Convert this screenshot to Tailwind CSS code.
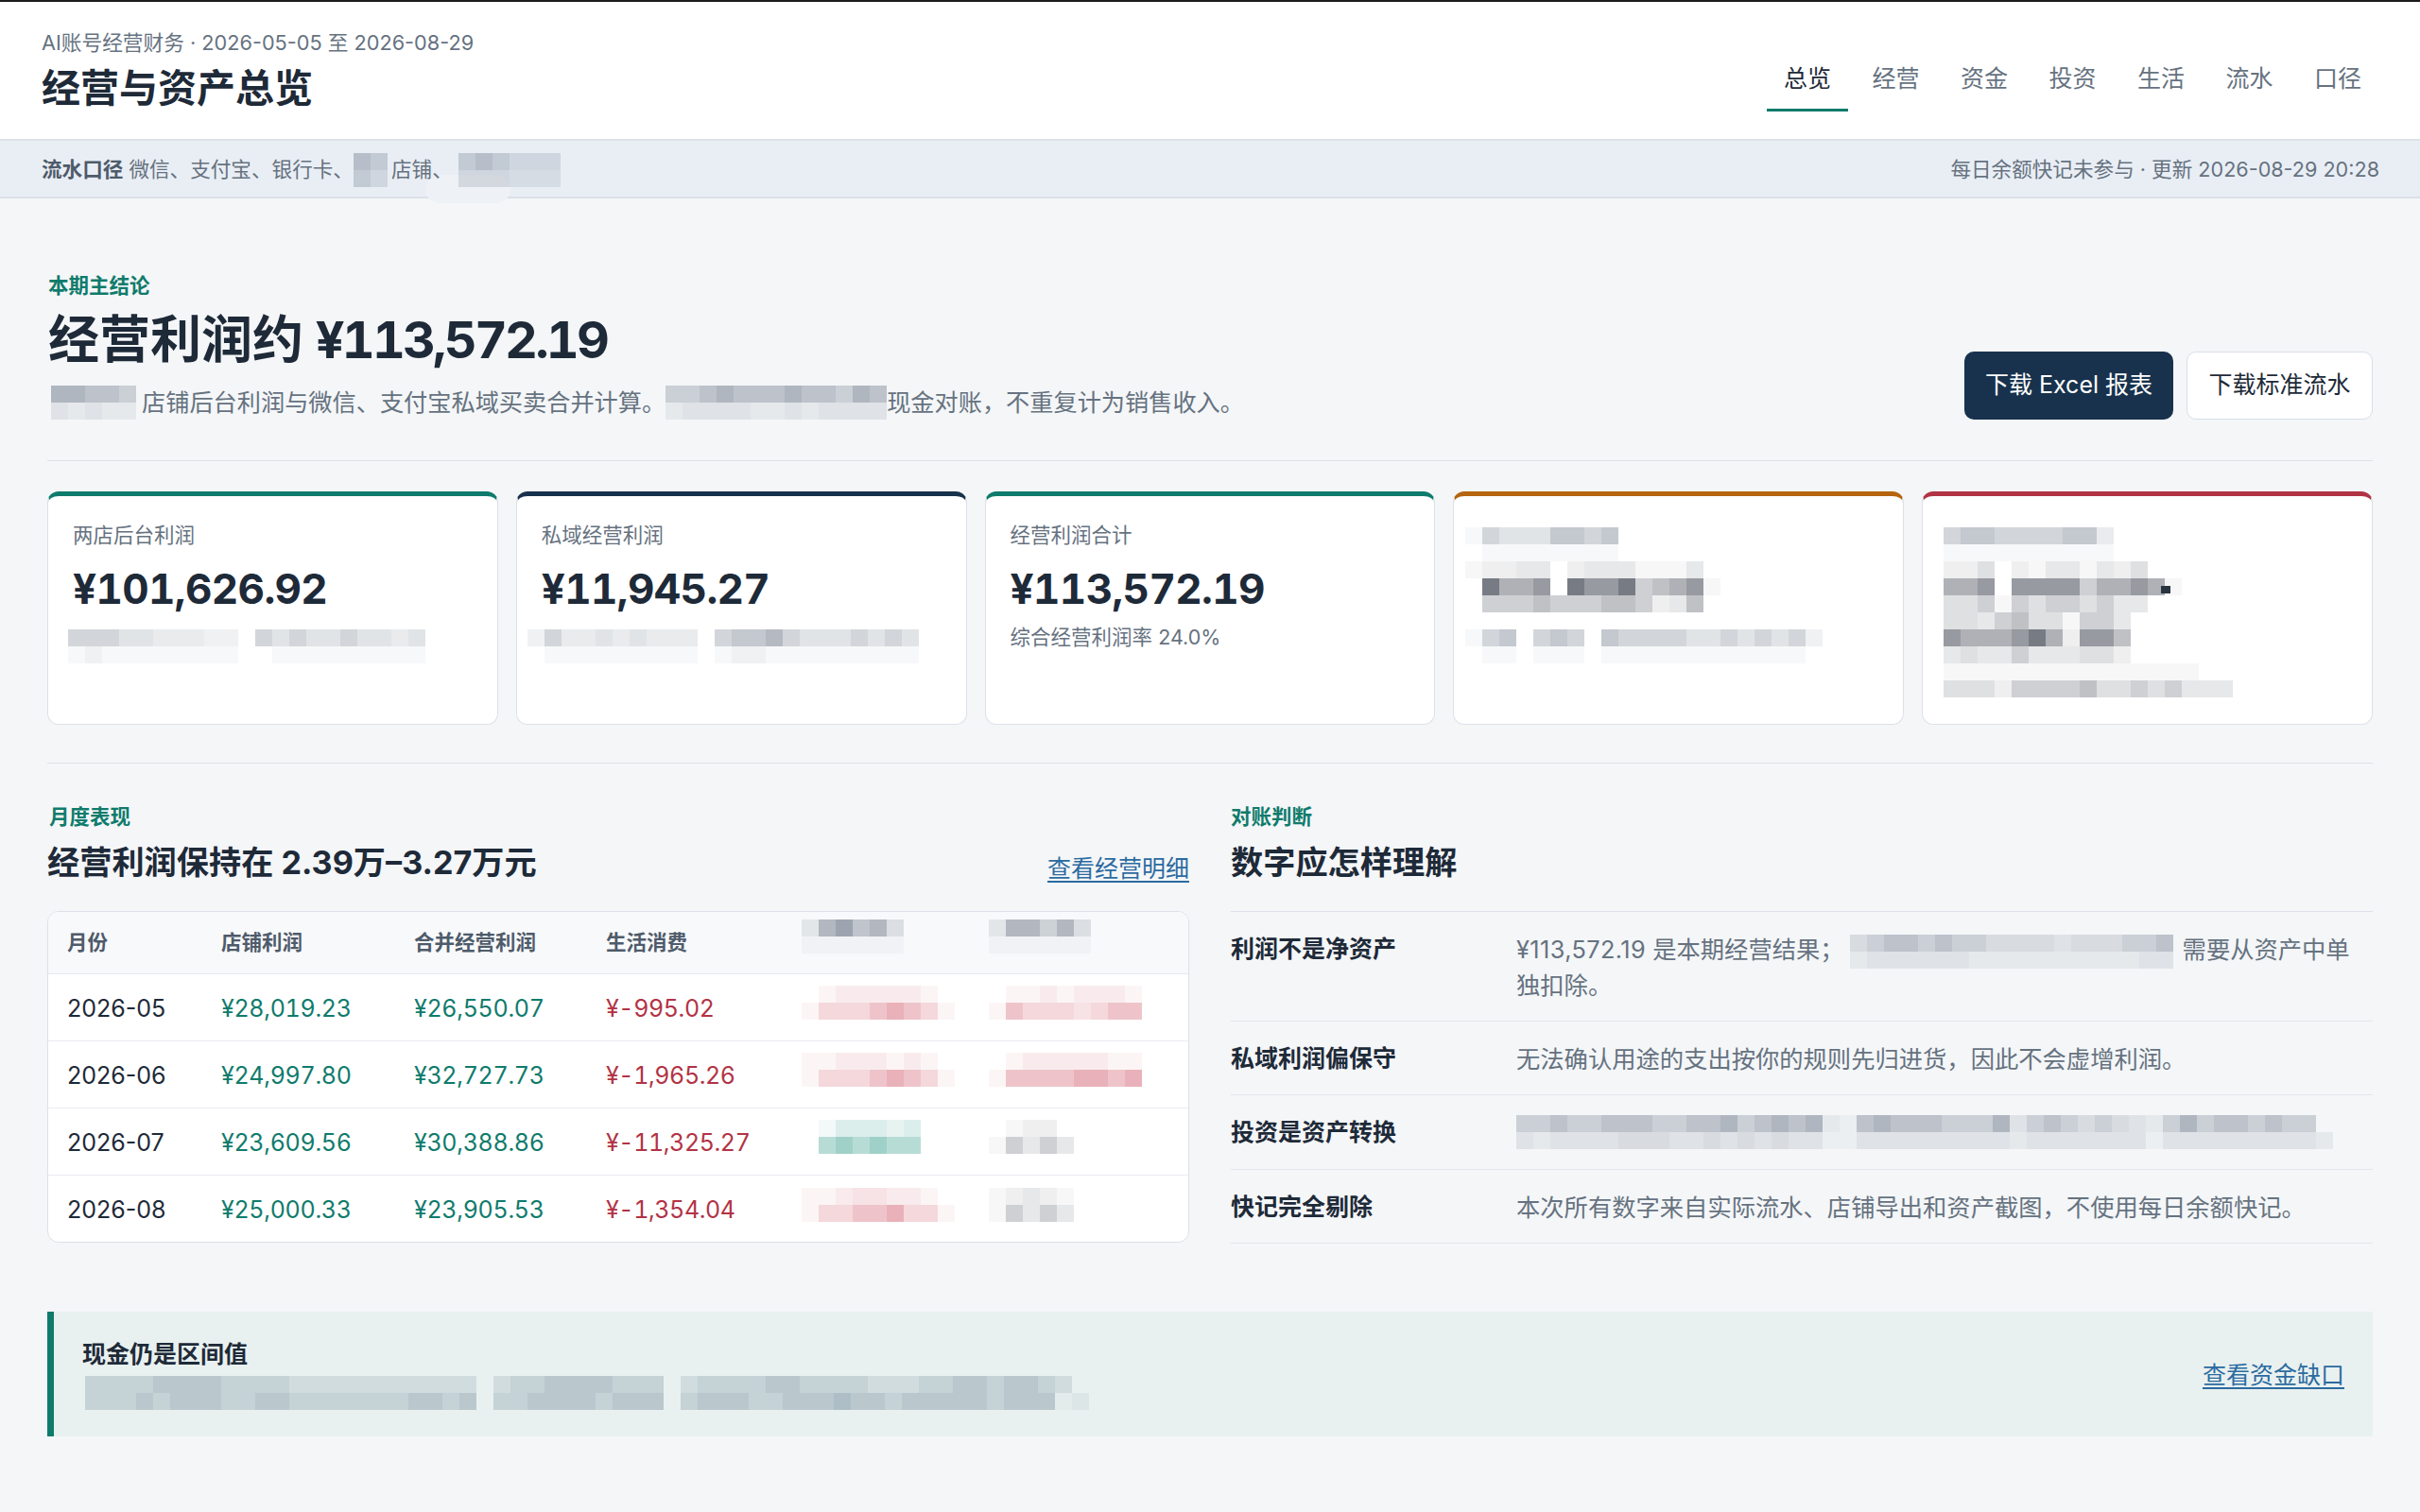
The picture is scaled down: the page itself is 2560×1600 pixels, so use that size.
<!doctype html>
<html lang="zh-CN">
<head>
<meta charset="utf-8">
<title>经营与资产总览</title>
<script src="https://cdn.jsdelivr.net/npm/@tailwindcss/browser@4"></script>
</head>
<body class="bg-[#f4f6f8]">
<div class="w-[2560px] h-[1600px] overflow-hidden flex flex-col bg-[#f4f6f8] text-[#1e2a38] font-[Inter,'Noto_Sans_CJK_SC',sans-serif]">

  <header class="h-[149px] shrink-0 bg-white border-t-2 border-t-[#1c1c1c] border-b-2 border-b-[#dde2e9] pl-[44px] pr-[44px] flex justify-between">
    <div>
      <div class="mt-[28px] text-[21.7px] leading-[30px] text-[#66727f]">AI账号经营财务 · 2026-05-05 至 2026-08-29</div>
      <div class="mt-[6px] text-[41px] leading-[54px] font-bold text-[#1e2a38]">经营与资产总览</div>
    </div>
    <nav class="flex gap-[8px] h-full items-start pt-[48px] text-[25px] leading-[66px] text-[#66727f]">
      <a class="w-[86px] h-[68px] text-center text-[#1e2a38] border-b-[3px] border-[#0f7b6c]">总览</a>
      <a class="w-[85px] h-[68px] text-center">经营</a>
      <a class="w-[86px] h-[68px] text-center">资金</a>
      <a class="w-[85px] h-[68px] text-center">投资</a>
      <a class="w-[86px] h-[68px] text-center">生活</a>
      <a class="w-[85px] h-[68px] text-center">流水</a>
      <a class="w-[86px] h-[68px] text-center">口径</a>
    </nav>
  </header>

  <div class="relative h-[61px] shrink-0 bg-[#e9eef5] border-b-2 border-[#dbe1e9] pt-[2px] pl-[44px] pr-[43px] flex items-center justify-between text-[21.6px] text-[#66727f]">
    <div class="absolute left-[450px] top-[36px] w-[90px] h-[30px] rounded-full bg-[#eef1f5]"></div>
    <div class="relative flex items-center whitespace-nowrap">
      <span class="font-semibold text-[#4e5b6a]">流水口径</span>
      <span class="ml-[6px]">微信、支付宝、银行卡、</span>
      <span class="mosaic" data-rows="65|54"></span>
      <span class="ml-[4px]">店铺、</span>
      <span class="mosaic ml-[6px]" data-rows="565444|444333"></span>
    </div>
    <div>每日余额快记未参与 · 更新 2026-08-29 20:28</div>
  </div>

  <main class="flex-1 px-[50px] flex flex-col">
    <section class="flex justify-between items-end pt-[78px] pb-[41px] border-b border-[#dde1e7]">
      <div>
        <div class="pl-[1px] text-[21.5px] leading-[28px] font-semibold text-[#0f7b6c]">本期主结论</div>
        <h1 class="mt-[8px] pl-[1px] text-[54px] leading-[72px] font-bold text-[#1e2a38]">经营利润约 <span class="tabular-nums tracking-[-2.8px]">¥113,572.19</span></h1>
        <p class="mt-[10px] flex items-center text-[25.2px] leading-[40px] text-[#66727f] whitespace-nowrap">
          <span class="mosaic ml-[4px] mr-[6px]" data-rows="77665|32322"></span>
          <span>店铺后台利润与微信、支付宝私域买卖合并计算。</span>
          <span class="mosaic" data-rows="5567666766576|2333322323333"></span>
          <span>现金对账，不重复计为销售收入。</span>
        </p>
      </div>
      <div class="flex gap-[14px] mb-[2px] text-[25px]">
        <button class="w-[221px] h-[72px] rounded-[10px] bg-[#18324d] text-white">下载 Excel 报表</button>
        <button class="w-[197px] h-[72px] rounded-[10px] bg-white border border-[#d8dfe8] text-[#1e2a38]">下载标准流水</button>
      </div>
    </section>

    <section class="grid grid-cols-5 gap-[19px] mt-[32px] h-[247px]">
      <div class="relative bg-white rounded-[12px] border border-[#dde1e8] border-t-[5px] border-t-[#0f7b6c] pl-[26px]">
        <div class="mt-[26px] text-[21.5px] leading-[30px] text-[#66727f]">两店后台利润</div>
        <div class="mt-[15px] text-[44px] leading-[54px] font-bold tabular-nums tracking-[-0.65px] text-[#1e2a38]">¥101,626.92</div>
        <span class="mosaic absolute left-[21px] top-[141px]" data-rows="555443332205454454434|121111111100111111111"></span>
      </div>
      <div class="relative bg-white rounded-[12px] border border-[#dde1e8] border-t-[5px] border-t-[#18324d] pl-[26px]">
        <div class="mt-[26px] text-[21.5px] leading-[30px] text-[#66727f]">私域经营利润</div>
        <div class="mt-[15px] text-[44px] leading-[54px] font-bold tabular-nums tracking-[-0.65px] text-[#1e2a38]">¥11,945.27</div>
        <span class="mosaic absolute left-[11px] top-[141px]" data-rows="25334343330566754445454|01111111110122111111111"></span>
      </div>
      <div class="relative bg-white rounded-[12px] border border-[#dde1e8] border-t-[5px] border-t-[#0f7b6c] pl-[26px]">
        <div class="mt-[26px] text-[21.5px] leading-[30px] text-[#66727f]">经营利润合计</div>
        <div class="mt-[15px] text-[44px] leading-[54px] font-bold tabular-nums tracking-[-0.65px] text-[#1e2a38]">¥113,572.19</div>
        <div class="mt-[9px] text-[21.5px] leading-[30px] text-[#66727f]">综合经营利润率 24.0%</div>
      </div>
      <div class="relative bg-white rounded-[12px] border border-[#dde1e8] border-t-[5px] border-t-[#b5650f]">
        <span class="mosaic absolute left-[12px] top-[33px]" data-rows="154446656|011111111"></span>
        <span class="mosaic absolute left-[12px] top-[69px]" data-k="g" data-rows="12233023331113|097780988956781|05556555665236"></span>
        <span class="mosaic absolute left-[12px] top-[141px]" data-rows="156056506555544545452|011011101111111111110"></span>
      </div>
      <div class="relative bg-white rounded-[12px] border border-[#dde1e8] border-t-[5px] border-t-[#b23345] overflow-hidden">
        <span class="mosaic absolute left-[22px] top-[33px]" data-rows="5665555663|1111111111"></span>
        <span class="mosaic absolute left-[22px] top-[69px]" data-k="g" data-rows="224021331324|77808888577871|445154554533|44356441553|87778972886|34335333442|11111111111111100|44425555644545333"></span>
        <span class="absolute left-[252px] top-[95px] w-[10px] h-[8px] bg-[#2a3441]"></span>
      </div>
    </section>

    <div class="mt-[40px] border-t border-[#dde1e7]"></div>

    <section class="grid grid-cols-2 gap-[44px] pt-[42px]">
      <div>
        <div class="pl-[2px] text-[21.5px] leading-[28px] font-semibold text-[#0f7b6c]">月度表现</div>
        <div class="mt-[12px] flex justify-between items-end">
          <h2 class="text-[34.2px] leading-[46px] font-bold text-[#1e2a38]">经营利润保持在 2.39万–3.27万元</h2>
          <a class="text-[25px] leading-[34px] text-[#2c6ba0] underline underline-offset-[4px]">查看经营明细</a>
        </div>
        <div class="mt-[28px] h-[351px] bg-white border border-[#dde1e8] rounded-[12px] overflow-hidden">
          <table class="table-fixed w-full border-collapse text-[25px] text-[#1e2a38]">
            <colgroup>
              <col class="w-[163px]"><col class="w-[204px]"><col class="w-[203px]"><col class="w-[207px]"><col class="w-[198px]"><col>
            </colgroup>
            <thead>
              <tr class="h-[65px] bg-[#f8f9fb] border-b border-[#e5e9ee] text-left text-[21.5px] text-[#4e5b6a]">
                <th class="pl-[20px] font-semibold">月份</th>
                <th class="pl-[20px] font-semibold">店铺利润</th>
                <th class="pl-[20px] font-semibold">合并经营利润</th>
                <th class="pl-[20px] font-semibold">生活消费</th>
                <th class="pl-[20px]"><span class="mosaic relative -top-[6px] align-top" data-rows="378674|111111"></span></th>
                <th class="pl-[20px]"><span class="mosaic relative -top-[6px] align-top" data-rows="377574|111111"></span></th>
              </tr>
            </thead>
            <tbody>
              <tr class="h-[71px] border-b border-[#e8ebf0]">
                <td class="pt-[4px] pl-[20px]">2026-05</td><td class="pt-[4px] pl-[20px] tabular-nums tracking-[-0.3px] text-[#0f7b6c]">¥28,019.23</td><td class="pt-[4px] pl-[20px] tabular-nums tracking-[-0.3px] text-[#0f7b6c]">¥26,550.07</td><td class="pt-[4px] pl-[20px] tabular-nums tracking-[-0.4px] text-[#b23345]">¥-995.02</td>
                <td class="pt-[4px] pl-[20px]"><span class="mosaic relative -top-[6px] align-top" data-k="r" data-rows="012222210|144456541"></span></td>
                <td class="pt-[4px] pl-[20px]"><span class="mosaic relative -top-[6px] align-top" data-k="r" data-rows="011212221|154443455"></span></td>
              </tr>
              <tr class="h-[71px] border-b border-[#e8ebf0]">
                <td class="pt-[4px] pl-[20px]">2026-06</td><td class="pt-[4px] pl-[20px] tabular-nums tracking-[-0.3px] text-[#0f7b6c]">¥24,997.80</td><td class="pt-[4px] pl-[20px] tabular-nums tracking-[-0.3px] text-[#0f7b6c]">¥32,727.73</td><td class="pt-[4px] pl-[20px] tabular-nums tracking-[-0.4px] text-[#b23345]">¥-1,965.26</td>
                <td class="pt-[4px] pl-[20px]"><span class="mosaic relative -top-[6px] align-top" data-k="r" data-rows="112221210|144456541"></span></td>
                <td class="pt-[4px] pl-[20px]"><span class="mosaic relative -top-[6px] align-top" data-k="r" data-rows="012222211|155556656"></span></td>
              </tr>
              <tr class="h-[71px] border-b border-[#e8ebf0]">
                <td class="pt-[4px] pl-[20px]">2026-07</td><td class="pt-[4px] pl-[20px] tabular-nums tracking-[-0.3px] text-[#0f7b6c]">¥23,609.56</td><td class="pt-[4px] pl-[20px] tabular-nums tracking-[-0.3px] text-[#0f7b6c]">¥30,388.86</td><td class="pt-[4px] pl-[20px] tabular-nums tracking-[-0.4px] text-[#b23345]">¥-11,325.27</td>
                <td class="pt-[4px] pl-[20px]"><span class="mosaic relative -top-[6px] align-top ml-[18px]" data-k="t" data-rows="133323|565655"></span></td>
                <td class="pt-[4px] pl-[20px]"><span class="mosaic relative -top-[6px] align-top" data-k="g" data-rows="01220|15353"></span></td>
              </tr>
              <tr class="h-[71px]">
                <td class="pt-[4px] pl-[20px]">2026-08</td><td class="pt-[4px] pl-[20px] tabular-nums tracking-[-0.3px] text-[#0f7b6c]">¥25,000.33</td><td class="pt-[4px] pl-[20px] tabular-nums tracking-[-0.3px] text-[#0f7b6c]">¥23,905.53</td><td class="pt-[4px] pl-[20px] tabular-nums tracking-[-0.4px] text-[#b23345]">¥-1,354.04</td>
                <td class="pt-[4px] pl-[20px]"><span class="mosaic relative -top-[5px] align-top" data-k="r" data-rows="112332210|144556441"></span></td>
                <td class="pt-[4px] pl-[20px]"><span class="mosaic relative -top-[5px] align-top" data-k="g" data-rows="12321|15353"></span></td>
              </tr>
            </tbody>
          </table>
        </div>
      </div>

      <div>
        <div class="text-[21.5px] leading-[28px] font-semibold text-[#0f7b6c]">对账判断</div>
        <h2 class="mt-[12px] text-[34.2px] leading-[46px] font-bold text-[#1e2a38]">数字应怎样理解</h2>
        <div class="mt-[28px] border-t border-[#dde1e8] text-[25.3px] leading-[37px]">
          <div class="h-[116px] pt-[21px] grid grid-cols-[302px_1fr] border-b border-[#e3e6eb]">
            <div class="text-[25px] font-semibold text-[#1e2a38]">利润不是净资产</div>
            <div class="text-[#66727f]"><span class="tracking-[0.4px]">¥113,572.19</span> 是本期经营结果；<span class="mosaic inline-flex align-middle -my-[1px] ml-[6px] mr-[10px]" data-rows="4566565544443444556|2333333222222222233"></span>需要从资产中单独扣除。</div>
          </div>
          <div class="h-[78px] pt-[21px] grid grid-cols-[302px_1fr] border-b border-[#e3e6eb]">
            <div class="text-[25px] font-semibold text-[#1e2a38]">私域利润偏保守</div>
            <div class="text-[#66727f]">无法确认用途的支出按你的规则先归进货，因此不会虚增利润。</div>
          </div>
          <div class="h-[79px] pt-[21px] grid grid-cols-[302px_1fr] border-b border-[#e3e6eb]">
            <div class="text-[25px] font-semibold text-[#1e2a38]">投资是资产转换</div>
            <div><span class="mosaic" data-rows="556556665566756767216766655573565454325756656550|323333444334343433113333333332333333313333333332"></span></div>
          </div>
          <div class="h-[78px] pt-[21px] grid grid-cols-[302px_1fr] border-b border-[#e3e6eb]">
            <div class="text-[25px] font-semibold text-[#1e2a38]">快记完全剔除</div>
            <div class="text-[#66727f]">本次所有数字来自实际流水、店铺导出和资产截图，不使用每日余额快记。</div>
          </div>
        </div>
      </div>
    </section>

    <section class="mt-[72px] h-[132px] bg-[#e9f1f0] border-l-[7px] border-[#0f7b6c] pl-[30px] pr-[30px] flex justify-between">
      <div>
        <div class="mt-[27px] text-[25px] leading-[36px] font-semibold text-[#1e2a38]">现金仍是区间值</div>
        <span class="mosaic mt-[5px] ml-[3px]" data-k="b" data-rows="555566665555444444444440455666655504555566555544455665665400|555656665566555555566560556666566605666556667665666665666120"></span>
      </div>
      <a class="mt-[49px] h-[36px] text-[25px] leading-[36px] text-[#2c6ba0] underline underline-offset-[4px]">查看资金缺口</a>
    </section>
  </main>
</div>

<script>
  var alphas = [0, .05, .1, .15, .2, .3, .4, .5, .65, .85];
  var tones = { g: '95,100,110', r: '200,60,80', t: '15,140,120', b: '115,140,155' };
  document.querySelectorAll('.mosaic').forEach(function (el) {
    var tone = tones[el.dataset.k] || '107,118,134';
    if (!el.classList.contains('inline-flex')) el.classList.add('flex');
    el.classList.add('flex-col', 'shrink-0');
    if (el.tagName === 'SPAN' && el.classList.contains('align-top')) { el.classList.remove('flex'); el.classList.add('inline-flex'); }
    el.dataset.rows.split('|').forEach(function (row) {
      var r = document.createElement('span');
      r.className = 'flex';
      row.split('').forEach(function (d) {
        var c = document.createElement('span');
        c.className = 'block w-[18px] h-[18px]';
        c.style.background = 'rgba(' + tone + ',' + alphas[+d] + ')';
        r.appendChild(c);
      });
      el.appendChild(r);
    });
  });
</script>
</body>
</html>
